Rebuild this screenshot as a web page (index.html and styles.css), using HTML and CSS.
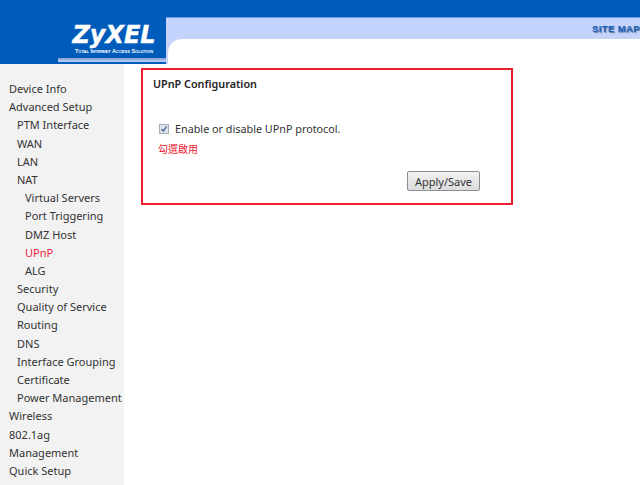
FILE: index.html
```html
<!DOCTYPE html>
<html lang="en">
<head>
    <meta charset="UTF-8">
    <title>UPnP Configuration</title>
    <link rel="stylesheet" href="styles.css">
</head>
<body>
    <div class="header">
        <div class="logo-block">
            <div class="logo-blue">
                <div class="logo">
                    <div class="logo-name">ZyXEL</div>
                    <div class="logo-tag">Total Internet Access Solution</div>
                </div>
            </div>
            <div class="logo-shadow"></div>
        </div>
        <div class="header-right">
            <div class="top-band"></div>
            <div class="link-band"><span class="site-map">SITE MAP</span></div>
            <div class="corner-band"><div class="corner"></div></div>
        </div>
    </div>
    <div class="main">
        <div class="menu">
            <a>Device Info</a>
            <a>Advanced Setup</a>
            <a class="sub">PTM Interface</a>
            <a class="sub">WAN</a>
            <a class="sub">LAN</a>
            <a class="sub">NAT</a>
            <a class="sub2">Virtual Servers</a>
            <a class="sub2">Port Triggering</a>
            <a class="sub2">DMZ Host</a>
            <a class="sub2 active">UPnP</a>
            <a class="sub2">ALG</a>
            <a class="sub">Security</a>
            <a class="sub">Quality of Service</a>
            <a class="sub">Routing</a>
            <a class="sub">DNS</a>
            <a class="sub">Interface Grouping</a>
            <a class="sub">Certificate</a>
            <a class="sub">Power Management</a>
            <a>Wireless</a>
            <a>802.1ag</a>
            <a>Management</a>
            <a>Quick Setup</a>
        </div>
        <div class="content">
            <div class="panel">
                <h1>UPnP Configuration</h1>
                <div class="option">
                    <svg class="check" width="10" height="10" viewBox="0 0 10 10">
                        <rect x="0.5" y="0.5" width="9" height="9" fill="#dfe3ec" stroke="#a9adb5"/>
                        <path d="M2.5 5 L4.3 7.2 L7.5 2.5" fill="none" stroke="#4c6c9c" stroke-width="1.4"/>
                    </svg>
                    <span>Enable or disable UPnP protocol.</span>
                </div>
                <div class="note">勾選啟用</div>
                <div class="actions">
                    <button>Apply/Save</button>
                </div>
            </div>
        </div>
    </div>
</body>
</html>
```

FILE: styles.css
```css
html, body {
    height: 100%;
}
body {
    margin: 0;
    background: #fff;
    color: #333;
    font-family: "Noto Sans", "Open Sans", sans-serif;
    font-size: 11px;
    overflow: hidden;
}
.header {
    display: flex;
    height: 64px;
}
.logo-block {
    width: 166px;
    flex: none;
    background: #005cbb;
    display: flex;
    flex-direction: column;
}
.logo-blue {
    height: 58px;
    display: flex;
    justify-content: flex-end;
    box-sizing: border-box;
    padding: 24px 10px 0 0;
}
.logo {
    width: 84px;
    color: #fff;
    text-align: center;
}
.logo-name {
    font-family: "DejaVu Sans", sans-serif;
    font-weight: bold;
    font-style: italic;
    font-size: 24px;
    line-height: 23px;
    letter-spacing: 0;
    -webkit-text-stroke: 0.4px #fff;
    white-space: nowrap;
}
.logo-tag {
    font-family: "Liberation Sans", sans-serif;
    font-size: 5.5px;
    font-variant: small-caps;
    font-weight: bold;
    line-height: 7px;
    margin-top: 1px;
    white-space: nowrap;
}
.logo-shadow {
    height: 4px;
    margin-left: 58px;
    margin-right: -2px;
    background: linear-gradient(#7f9fd8, #c3d3f7);
}
.header-right {
    flex: 1;
    display: flex;
    flex-direction: column;
}
.top-band {
    height: 18px;
    background: #005cbb;
    border-bottom: 1px solid #6d9be0;
    box-sizing: border-box;
}
.link-band {
    height: 21px;
    background: #c3d3fb;
    display: flex;
    align-items: center;
    justify-content: flex-end;
}
.site-map {
    font-family: "Liberation Sans", sans-serif;
    font-weight: bold;
    font-size: 9.5px;
    letter-spacing: 0.4px;
    color: #1a62c0;
    text-shadow: 1px 1px 1px #5a6f90;
}
.corner-band {
    flex: 1;
    background: #c3d3fb;
    padding-left: 2px;
}
.corner {
    height: 100%;
    background: #fff;
    border-top-left-radius: 14px;
}
.main {
    display: flex;
    height: 421px;
}
.menu {
    width: 124px;
    flex: none;
    background: #f2f2f2;
    box-sizing: border-box;
    padding: 16px 0 0 9px;
}
.menu a {
    display: block;
    height: 18.19px;
    line-height: 18.19px;
    white-space: nowrap;
}
.menu .sub {
    padding-left: 8px;
}
.menu .sub2 {
    padding-left: 16px;
}
.menu .active {
    color: #ee1c3c;
}
.content {
    flex: 1;
    padding: 4px 0 0 17px;
}
.panel {
    width: 372px;
    height: 137px;
    box-sizing: border-box;
    border: 2px solid #ed1c2e;
    padding: 6px 31px 0 10px;
}
h1 {
    margin: 0;
    font-size: 10.8px;
    font-weight: 600;
    line-height: 16px;
    color: #222;
}
.option {
    display: flex;
    align-items: center;
    gap: 6px;
    margin: 29px 0 0 6px;
    font-size: 10.8px;
    line-height: 16px;
}
.note {
    margin-top: 5px;
    margin-left: 5px;
    font-family: "Noto Sans CJK TC", sans-serif;
    font-size: 10px;
    line-height: 14px;
    color: #ee2030;
}
.actions {
    display: flex;
    justify-content: flex-end;
    margin-top: 15px;
}
button {
    width: 73px;
    height: 20px;
    padding: 0;
    font-family: inherit;
    font-size: 11px;
    line-height: 15px;
    color: #333;
    background: linear-gradient(#f2f2f2, #dcdcdc);
    border: 1px solid #8e8e8e;
    border-radius: 2px;
}
```
